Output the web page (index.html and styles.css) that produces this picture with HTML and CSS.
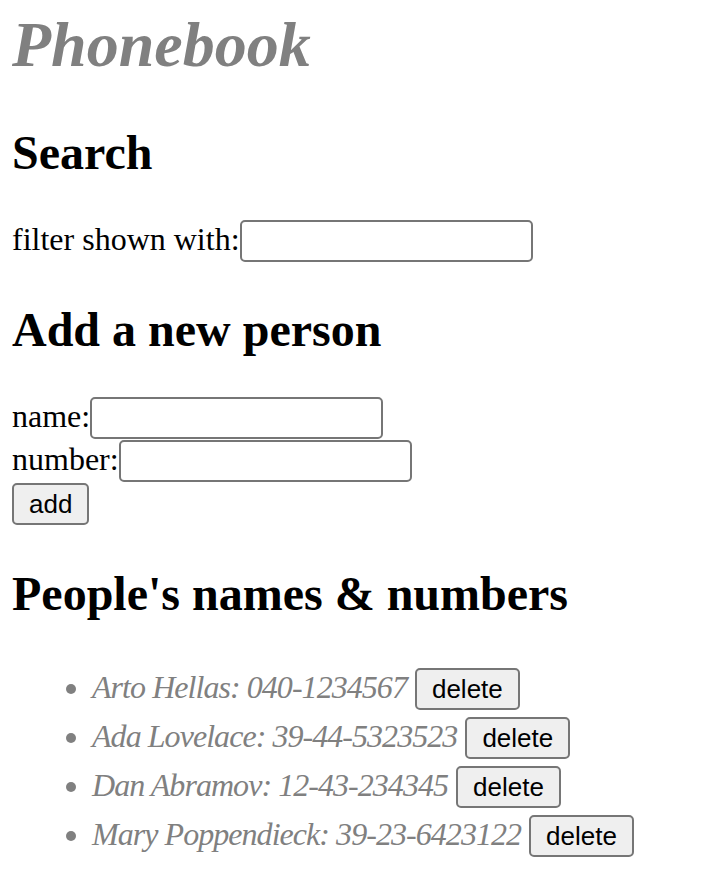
FILE: index.html
```html
<!DOCTYPE html>
<html>
<head>
<meta charset="utf-8">
<link rel="stylesheet" href="styles.css">
<title>Phonebook</title>
</head>
<body>
<h1 class="title">Phonebook</h1>
<h2 class="section">Search</h2>
<div class="field">filter shown with:<input class="text-input"></div>
<h2 class="section">Add a new person</h2>
<form class="person-form">
  <div class="field row">name:<input class="text-input"></div>
  <div class="field row">number:<input class="text-input"></div>
  <div class="field row"><button class="btn" type="button">add</button></div>
</form>
<h2 class="section">People's names &amp; numbers</h2>
<ul class="people">
  <li class="person"><span class="entry">Arto Hellas: 040-1234567</span> <button class="btn" type="button">delete</button></li>
  <li class="person"><span class="entry">Ada Lovelace: 39-44-5323523</span> <button class="btn" type="button">delete</button></li>
  <li class="person"><span class="entry">Dan Abramov: 12-43-234345</span> <button class="btn" type="button">delete</button></li>
  <li class="person"><span class="entry">Mary Poppendieck: 39-23-6423122</span> <button class="btn" type="button">delete</button></li>
</ul>
</body>
</html>
```
FILE: styles.css
```css
html { background: #fff; }
body {
  margin: 0 12px;
  font-family: "Liberation Serif", "Times New Roman", serif;
  font-size: 32px;
  color: #000;
}
.title {
  font-size: 64px;
  font-style: italic;
  font-weight: bold;
  color: #808080;
  margin: 8px 0 43px;
}
.section {
  font-size: 48px;
  font-weight: bold;
  margin: 40px 0;
}
.field { margin: 0; }
.row { min-height: 43px; }
.person-form { margin: 0; }
.text-input {
  box-sizing: border-box;
  width: 293px;
  height: 42px;
  margin: 0;
  padding: 2px 4px;
  border: 2px solid #767676;
  border-radius: 5px;
  font-family: "Liberation Sans", Arial, sans-serif;
  font-size: 26px;
  background: #fff;
  vertical-align: baseline;
}
.btn {
  box-sizing: border-box;
  height: 42px;
  margin: 0;
  padding: 2px 15px;
  border: 2px solid #767676;
  border-radius: 5px;
  background: #efefef;
  color: #000;
  font-family: "Liberation Sans", Arial, sans-serif;
  font-size: 26px;
}
.people {
  margin: 47px 0 0;
  padding-left: 80px;
  color: #808080;
  font-style: italic;
}
.person { margin: 0 0 7px; }
.entry { letter-spacing: -0.95px; }
.person .btn { font-style: normal; }
```
